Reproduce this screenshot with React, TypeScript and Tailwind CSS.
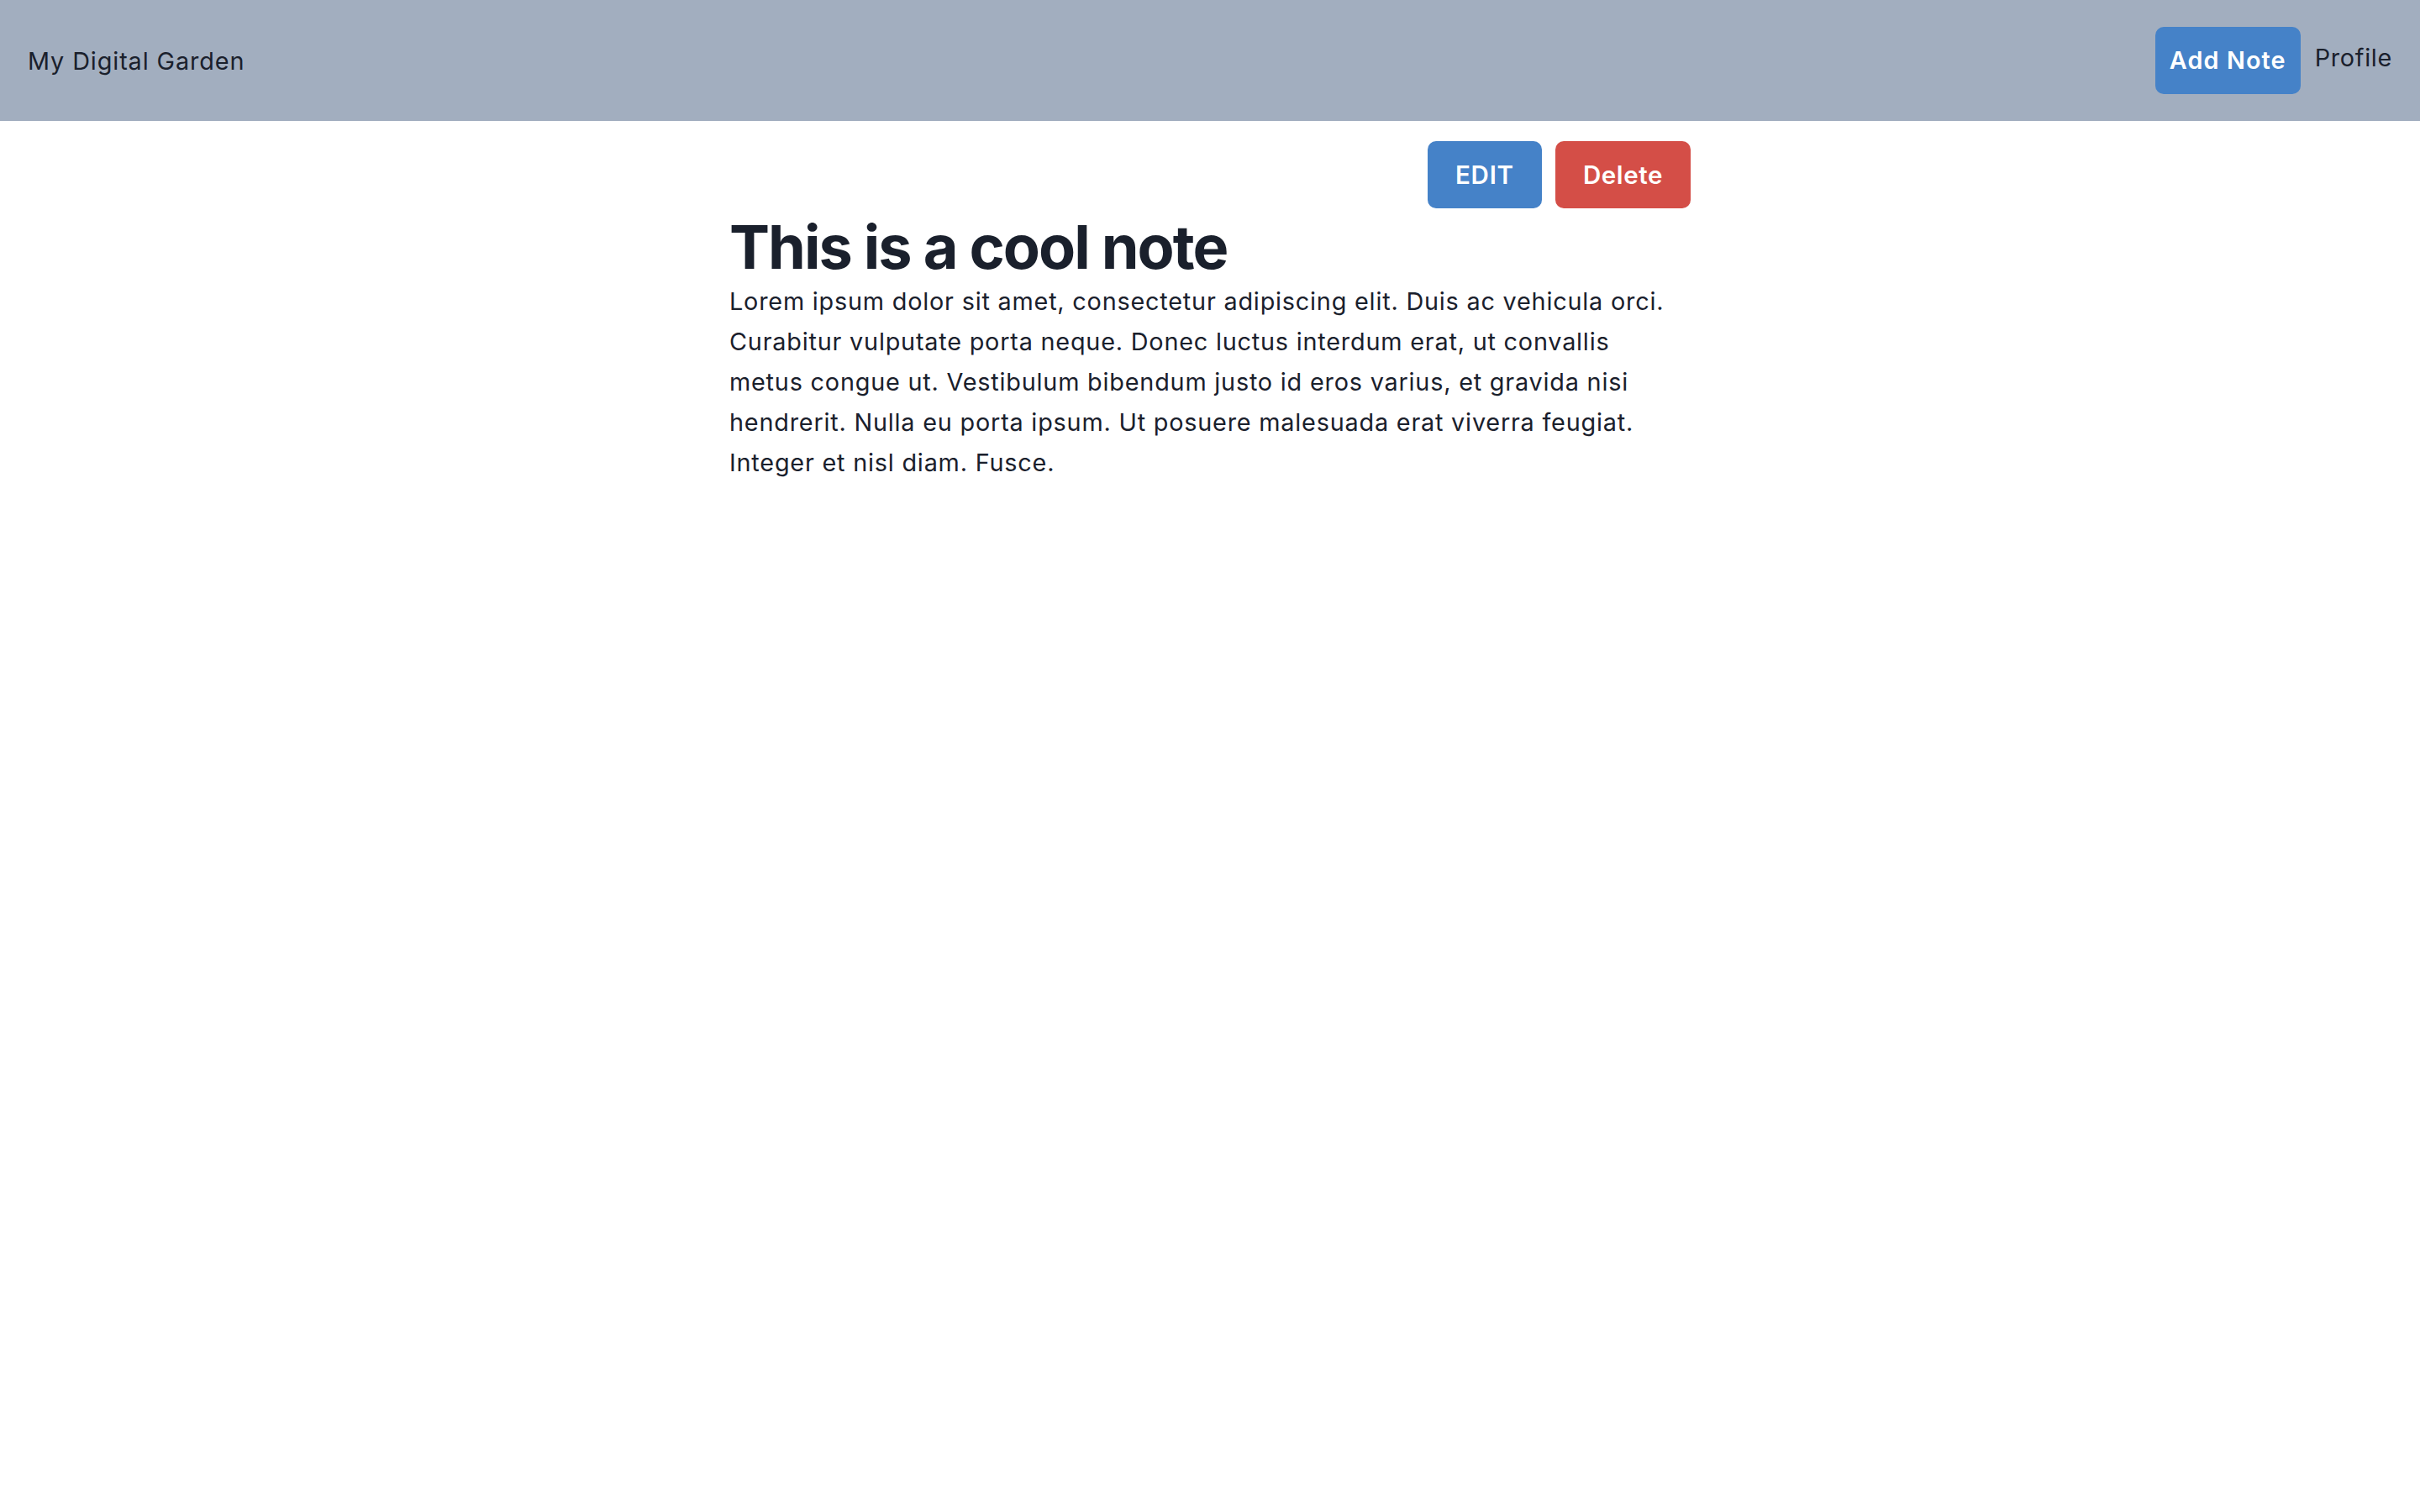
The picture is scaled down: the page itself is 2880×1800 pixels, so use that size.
import React from 'react';

const note = {
  title: "This is a cool note",
  body: "Lorem ipsum dolor sit amet, consectetur adipiscing elit. Duis ac vehicula orci. Curabitur vulputate porta neque. Donec luctus interdum erat, ut convallis metus congue ut. Vestibulum bibendum justo id eros varius, et gravida nisi hendrerit. Nulla eu porta ipsum. Ut posuere malesuada erat viverra feugiat. Integer et nisl diam. Fusce.",
};

const NotePage = () => {
  return (
    <div className="min-h-screen bg-white text-[#1a202c]" style={{ fontFamily: 'Inter, "Noto Sans", sans-serif' }}>
      {/* Header */}
      <header className="h-[144px] bg-[#a2aebf] flex items-center justify-between pl-[33px] pr-[33px]">
        <a className="text-[28.8px] leading-[43px] tracking-[0.9px]">My Digital Garden</a>
        <div className="flex items-center gap-[17px]">
          <button className="h-[80px] px-[17px] rounded-[10px] bg-[#4582c8] text-white text-[28.8px] tracking-[1.1px] font-semibold">
            Add Note
          </button>
          <a className="text-[28.8px] leading-[43px] tracking-[0.7px] pb-[7px]">Profile</a>
        </div>
      </header>

      {/* Note */}
      <main className="w-[1144px] mx-auto pt-[24px]">
        <div className="flex justify-end gap-[16px]">
          <button className="h-[80px] px-[33px] rounded-[10px] bg-[#4582c8] text-white text-[29.5px] tracking-[0.8px] font-semibold">
            EDIT
          </button>
          <button className="h-[80px] px-[33px] rounded-[10px] bg-[#d44e47] text-white text-[29.5px] tracking-[0.6px] font-semibold">
            Delete
          </button>
        </div>
        <h1 className="text-[72px] leading-[1.2] font-bold tracking-[-2px] pt-[3px] mb-[-2px]">{note.title}</h1>
        <p className="text-[28.8px] leading-[48px] tracking-[0.8px] pr-[14px]">{note.body}</p>
      </main>
    </div>
  );
};

export default NotePage;
